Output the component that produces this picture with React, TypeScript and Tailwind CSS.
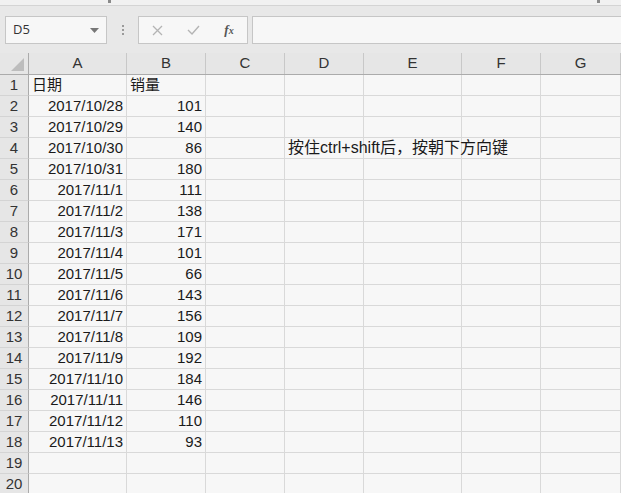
import React from 'react';

const cols = ['A', 'B', 'C', 'D', 'E', 'F', 'G'];
const widths = ['w-[98px]', 'w-[79px]', 'w-[79px]', 'w-[79px]', 'w-[98px]', 'w-[79px]', 'flex-1'];

const data: [string, string][] = [
  ['2017/10/28', '101'],
  ['2017/10/29', '140'],
  ['2017/10/30', '86'],
  ['2017/10/31', '180'],
  ['2017/11/1', '111'],
  ['2017/11/2', '138'],
  ['2017/11/3', '171'],
  ['2017/11/4', '101'],
  ['2017/11/5', '66'],
  ['2017/11/6', '143'],
  ['2017/11/7', '156'],
  ['2017/11/8', '109'],
  ['2017/11/9', '192'],
  ['2017/11/10', '184'],
  ['2017/11/11', '146'],
  ['2017/11/12', '110'],
  ['2017/11/13', '93'],
];

const font = { fontFamily: '"Liberation Sans", "Noto Sans CJK SC", sans-serif' };

function cellText(row: number, col: number): { text: string; right?: boolean } {
  if (row === 1) {
    if (col === 0) return { text: '日期' };
    if (col === 1) return { text: '销量' };
    return { text: '' };
  }
  const d = data[row - 2];
  if (d && col < 2) return { text: d[col], right: true };
  if (row === 4 && col === 3) return { text: '按住ctrl+shift后，按朝下方向键' };
  return { text: '' };
}

export default function App() {
  const rows = Array.from({ length: 20 }, (_, i) => i + 1);
  return (
    <div className="w-[621px] h-[493px] overflow-hidden bg-[#f7f7f7] text-[#1a1a1a]" style={font}>
      {/* top strip */}
      <div className="h-[6px] bg-[#f1f1f1] border-b border-[#d4d4d4] relative">
        <div className="absolute left-[108px] top-0 w-[3px] h-[3px] bg-[#8a8a8a]" />
        <div className="absolute left-[597px] top-0 w-[3px] h-[3px] bg-[#8a8a8a]" />
      </div>

      {/* formula bar */}
      <div className="h-[47px] bg-[#e8e8e8] flex items-start pt-[10px] pl-[5px]">
        <div className="w-[102px] h-[28px] bg-[#f7f7f7] border border-[#c6c6c6] flex items-center justify-between px-[7px]">
          <span className="text-[13px] text-[#333]" style={{ fontFamily: '"Open Sans", "Liberation Sans", sans-serif' }}>D5</span>
          <svg width="9" height="5" viewBox="0 0 9 5"><path d="M0 0h9L4.5 5z" fill="#777" /></svg>
        </div>
        <div className="w-[31px] h-[28px] flex flex-col items-center justify-center gap-[2px]">
          <div className="w-[2px] h-[2px] bg-[#9a9a9a]" />
          <div className="w-[2px] h-[2px] bg-[#9a9a9a]" />
          <div className="w-[2px] h-[2px] bg-[#9a9a9a]" />
        </div>
        <div className="w-[110px] h-[28px] bg-[#f7f7f7] border border-[#c6c6c6] flex items-center">
          <div className="w-[36px] flex justify-center">
            <svg width="11" height="11" viewBox="0 0 11 11"><path d="M1 1l9 9M10 1l-9 9" stroke="#b4b4b4" strokeWidth="1.3" /></svg>
          </div>
          <div className="w-[36px] flex justify-center">
            <svg width="13" height="10" viewBox="0 0 13 10"><path d="M1 5l4 4 7-8" stroke="#b4b4b4" strokeWidth="1.4" fill="none" /></svg>
          </div>
          <div className="w-[36px] flex justify-center">
            <span className="text-[13px] italic text-[#555] font-bold" style={{ fontFamily: '"Liberation Serif", serif' }}>
              f<span className="text-[10px]">x</span>
            </span>
          </div>
        </div>
        <div className="ml-[4px] flex-1 h-[28px] bg-[#f7f7f7] border border-[#c6c6c6] border-r-0" />
      </div>

      {/* column header */}
      <div className="flex h-[22px] bg-[#e6e6e6] border-b border-[#ababab]">
        <div className="w-[29px] border-r border-[#ababab] relative">
          <svg className="absolute right-[4px] bottom-[3px]" width="13" height="13" viewBox="0 0 13 13"><path d="M13 0v13H0z" fill="#bdbdbd" /></svg>
        </div>
        {cols.map((c, i) => (
          <div
            key={c}
            className={`${widths[i]} border-r border-[#c8c8c8] flex items-center justify-center text-[15px] text-[#333]`}
          >
            {c}
          </div>
        ))}
      </div>

      {/* rows */}
      {rows.map((r) => (
        <div key={r} className="flex h-[21px]">
          <div className="w-[29px] bg-[#e6e6e6] border-r border-[#ababab] border-b border-b-[#d4d4d4] flex items-center justify-center text-[15px] text-[#333]">
            {r}
          </div>
          {cols.map((c, i) => {
            const t = cellText(r, i);
            const note = r === 4 && i === 3;
            return (
              <div
                key={c}
                className={`${widths[i]} border-r border-b border-[#d9d9d9] flex items-center whitespace-nowrap ${
                  t.right ? 'justify-end pr-[3px]' : 'pl-[3px]'
                } ${note ? 'overflow-visible z-10 text-[16px]' : 'overflow-hidden text-[15px]'}`}
              >
                {t.text}
              </div>
            );
          })}
        </div>
      ))}
    </div>
  );
}
